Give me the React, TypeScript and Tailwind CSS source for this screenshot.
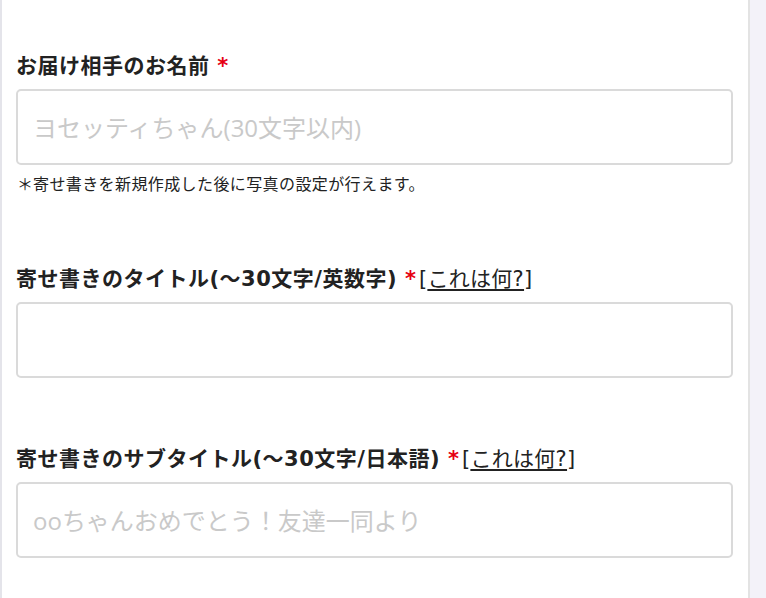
import React from 'react';

const labelFont = { fontFamily: '"DejaVu Sans", "Noto Sans CJK JP", sans-serif' };
const inputFont = { fontFamily: '"Open Sans", "Noto Sans CJK JP", sans-serif' };

function Label({ text, help }: { text: string; help?: boolean }) {
  return (
    <div style={labelFont} className="flex items-center h-[30px] mb-2 text-[21px] leading-[30px] text-[#222] whitespace-pre">
      <span className="font-bold tracking-[0.5px]">{text} </span>
      <span className="font-bold text-[#e60012]">*</span>
      {help && (
        <span className="font-normal text-[#222] ml-[3px] tracking-[0.3px]">
          [<a href="#" className="underline underline-offset-[3px]">これは何?</a>]
        </span>
      )}
    </div>
  );
}

function Field({ placeholder }: { placeholder?: string }) {
  return (
    <input
      type="text"
      placeholder={placeholder}
      style={inputFont}
      className="block w-full h-[76px] border-2 border-[#dadada] rounded-[5px] bg-white px-[15px] text-[24px] text-[#222] placeholder:text-[#c9c9c9] outline-none"
    />
  );
}

export default function App() {
  return (
    <div style={inputFont} className="min-h-[598px] w-full bg-[#f3f2f9] overflow-hidden">
      <div className="w-[750px] min-h-[598px] bg-white border-l-2 border-l-[#e4e4ea] border-r-2 border-r-[#e3e3e3] pl-[14px] pr-[15px] pt-[51px]">
        <Label text="お届け相手のお名前" />
        <Field placeholder="ヨセッティちゃん(30文字以内)" />
        <p className="mt-[6px] pl-[1px] text-[16px] leading-[24px] text-[#222] tracking-[0.4px]" style={{ fontFamily: '"Noto Sans CJK JP", sans-serif' }}>
          <span className="inline-block w-[16px]">＊</span>
          寄せ書きを新規作成した後に写真の設定が行えます。
        </p>

        <div className="mt-[69px]">
          <Label text="寄せ書きのタイトル(〜30文字/英数字)" help />
          <Field />
        </div>

        <div className="mt-[66px]">
          <Label text="寄せ書きのサブタイトル(〜30文字/日本語)" help />
          <Field placeholder="ooちゃんおめでとう！友達一同より" />
        </div>
      </div>
    </div>
  );
}
